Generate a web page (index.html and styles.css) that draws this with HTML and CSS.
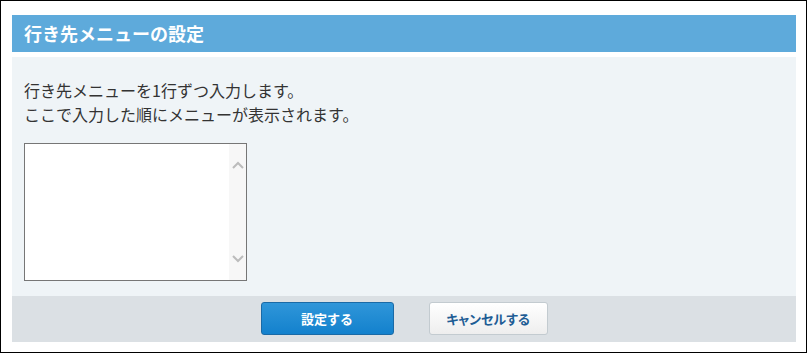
FILE: index.html
```html
<!DOCTYPE html>
<html lang="ja">
<head>
<meta charset="utf-8">
<title>行き先メニューの設定</title>
<link rel="stylesheet" href="styles.css">
</head>
<body>
<div class="frame">
  <section class="panel">
    <h1 class="title">行き先メニューの設定</h1>
    <div class="content">
      <p class="desc">行き先メニューを1行ずつ入力します。<br>ここで入力した順にメニューが表示されます。</p>
      <div class="field">
        <textarea class="input" aria-label="行き先メニュー"></textarea>
        <div class="scroll">
          <svg class="arrow" width="12" height="8" viewBox="0 0 12 8"><path d="M1 7 L6 2 L11 7" fill="none" stroke="#bcbcbc" stroke-width="2"/></svg>
          <svg class="arrow" width="12" height="8" viewBox="0 0 12 8"><path d="M1 1 L6 6 L11 1" fill="none" stroke="#bcbcbc" stroke-width="2"/></svg>
        </div>
      </div>
    </div>
    <div class="footer">
      <button class="btn btn-primary" type="button">設定する</button>
      <button class="btn btn-cancel" type="button">キャンセルする</button>
    </div>
  </section>
</div>
</body>
</html>
```
FILE: styles.css
```css
html, body {
  margin: 0;
  padding: 0;
  background: #ffffff;
}
body {
  font-family: "Noto Sans CJK JP", "Noto Sans", sans-serif;
  color: #333333;
}
.frame {
  box-sizing: border-box;
  width: 807px;
  height: 353px;
  border: 1px solid #000000;
  padding: 14px 10px 0 11px;
  background: #ffffff;
}
.panel {
  width: 784px;
}
.title {
  margin: 0;
  height: 37px;
  line-height: 37px;
  background: #5eaadb;
  color: #ffffff;
  font-size: 18px;
  font-weight: bold;
  padding: 0 0 0 12px;
}
.content {
  margin-top: 5px;
  height: 239px;
  box-sizing: border-box;
  background: #eff4f7;
  padding: 21px 12px 0 12px;
}
.desc {
  margin: 0;
  font-size: 16px;
  line-height: 24px;
  color: #333333;
}
.field {
  margin-top: 17px;
  box-sizing: border-box;
  width: 223px;
  height: 138px;
  border: 1px solid #767676;
  background: #ffffff;
  display: flex;
}
.input {
  flex: 1;
  border: none;
  outline: none;
  resize: none;
  margin: 0;
  padding: 2px;
  background: #ffffff;
  font-family: inherit;
  overflow: hidden;
}
.scroll {
  width: 17px;
  background: #f7f7f7;
  display: flex;
  flex-direction: column;
  justify-content: space-between;
  align-items: center;
  padding: 17px 0 17px 0;
}
.arrow {
  display: block;
}
.footer {
  height: 46px;
  background: #dbe0e4;
  display: flex;
  justify-content: center;
  align-items: center;
  gap: 35px;
  padding-bottom: 1px;
  box-sizing: border-box;
}
.btn {
  box-sizing: border-box;
  height: 33px;
  border-radius: 3px;
  font-family: inherit;
  font-size: 13px;
  font-weight: bold;
  padding: 0;
  cursor: pointer;
}
.btn-primary {
  width: 133px;
  color: #ffffff;
  border: 1px solid #1a6aa6;
  background: linear-gradient(#2f96d9, #1381cd);
}
.btn-cancel {
  width: 119px;
  color: #1e5d95;
  border: 1px solid #c3cbd0;
  background: linear-gradient(#ffffff, #eeeeee);
  font-feature-settings: "palt";
}
```
